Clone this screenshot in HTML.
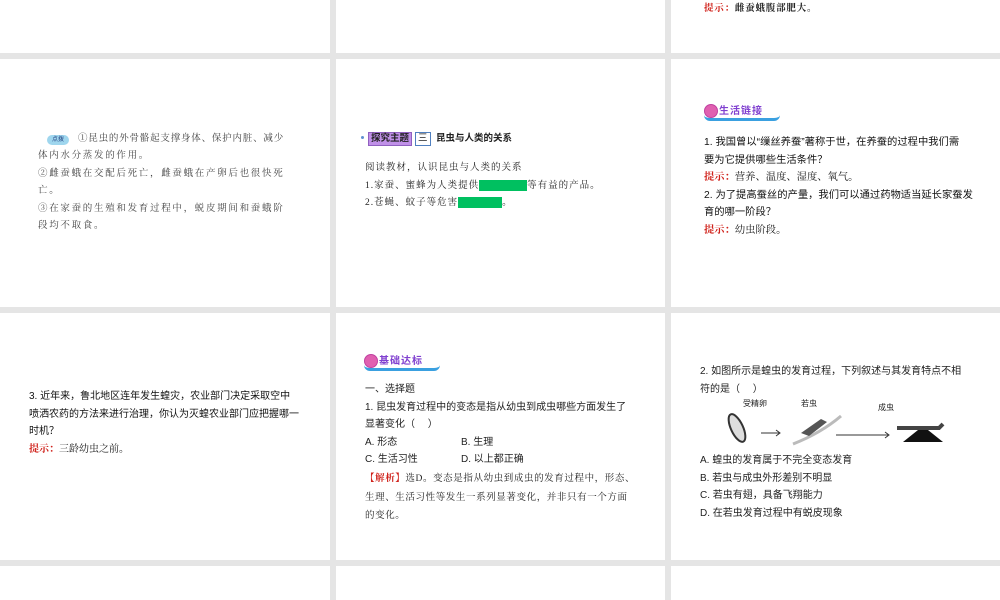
<!DOCTYPE html>
<html><head><meta charset="utf-8"><style>
body{margin:0;width:1000px;height:600px;background:#e5e5e5;position:relative;overflow:hidden;font-family:"Liberation Sans","Noto Sans CJK SC",sans-serif;color:#222}
.p{position:absolute;background:#fff}
.t{position:absolute;font-size:9.5px;line-height:17.5px;white-space:nowrap}
.s{font-family:"Liberation Serif","Noto Serif CJK SC",serif}
.r{color:#d0221b;font-weight:bold}
.b{font-weight:bold}
.badge{position:absolute;height:14px;border-bottom:3px solid #3aa0e0;border-radius:0 0 6px 6px;white-space:nowrap}
.badge .c{position:absolute;left:0;top:0;width:12px;height:12px;border-radius:50%;background:#e060b0;border:1px solid #c040a0}
.badge .w{position:absolute;left:15px;top:-2px;font-size:10px;font-weight:bold;color:#8040d0;letter-spacing:1px;white-space:nowrap}
.g{display:inline-block;background:#00c060;height:11px;vertical-align:middle}
</style></head><body>
<div class="p" style="left:0;top:0;width:330px;height:53px"></div>
<div class="p" style="left:336px;top:0;width:329px;height:53px"></div>
<div class="p" style="left:671px;top:0;width:329px;height:53px">
<div class="t s" style="left:33px;top:1px;letter-spacing:0.8px"><span class="r">提示：</span><span class="b">雌蚕蛾腹部肥大。</span></div></div>

<div class="p" style="left:0;top:59px;width:330px;height:248px">
<div style="position:absolute;left:47px;top:76px;width:22px;height:10px;border-radius:5px;background:#9fd6ee;font-size:6px;text-align:center;line-height:10px;color:#204080">点拨</div>
<div class="t s" style="left:78px;top:72px;color:#444;letter-spacing:0.8px">①昆虫的外骨骼起支撑身体、保护内脏、减少</div>
<div class="t s" style="left:38px;top:89px;color:#444;letter-spacing:1.7px">体内水分蒸发的作用。<br>②雌蚕蛾在交配后死亡，雌蚕蛾在产卵后也很快死<br>亡。<br>③在家蚕的生殖和发育过程中，蜕皮期间和蚕蛾阶<br>段均不取食。</div></div>

<div class="p" style="left:336px;top:59px;width:329px;height:248px">
<div style="position:absolute;left:25px;top:77px;width:3px;height:3px;border-radius:50%;background:#6090d0"></div>
<div style="position:absolute;left:32px;top:73px;background:#c090e8;border:1px solid #9060c0;font-size:9.5px;font-weight:bold;padding:0 2px;line-height:12px">探究主题</div>
<div style="position:absolute;left:79px;top:73px;border:1px solid #5080c0;font-size:9.5px;padding:0 2px;line-height:12px">三</div>
<div class="t b" style="left:100px;top:71px">昆虫与人类的关系</div>
<div class="t s" style="left:29px;top:101px;letter-spacing:1px">阅读教材，认识昆虫与人类的关系<br>1.家蚕、蜜蜂为人类提供<span class="g" style="width:48px"></span>等有益的产品。<br>2.苍蝇、蚊子等危害<span class="g" style="width:44px"></span>。</div></div>

<div class="p" style="left:671px;top:59px;width:329px;height:248px">
<div class="badge" style="left:33px;top:45px;width:76px"><div class="c"></div><div class="w">生活链接</div></div>
<div class="t" style="left:33px;top:75px;font-size:10.3px;color:#111">1. 我国曾以“缫丝养蚕”著称于世，在养蚕的过程中我们需<br>要为它提供哪些生活条件？<br><span class="r s">提示：</span><span class="s">营养、温度、湿度、氧气。</span><br>2. 为了提高蚕丝的产量，我们可以通过药物适当延长家蚕发<br>育的哪一阶段？<br><span class="r s">提示：</span><span class="s">幼虫阶段。</span></div></div>

<div class="p" style="left:0;top:313px;width:330px;height:247px">
<div class="t" style="left:29px;top:75px;font-size:10px;color:#111">3. 近年来，鲁北地区连年发生蝗灾，农业部门决定采取空中<br>喷洒农药的方法来进行治理，你认为灭蝗农业部门应把握哪一<br>时机？<br><span class="r s">提示：</span><span class="s">三龄幼虫之前。</span></div></div>

<div class="p" style="left:336px;top:313px;width:329px;height:247px">
<div class="badge" style="left:28px;top:41px;width:76px"><div class="c"></div><div class="w">基础达标</div></div>
<div class="t" style="left:29px;top:68px;font-size:10px">一、选择题<br>1. 昆虫发育过程中的变态是指从幼虫到成虫哪些方面发生了<br>显著变化（　 ）<br>A. 形态<span style="position:absolute;left:96px">B. 生理</span><br>C. 生活习性<span style="position:absolute;left:96px">D. 以上都正确</span></div>
<div class="t s" style="left:29px;top:157px;line-height:18.5px;letter-spacing:0.6px"><span class="r">【解析】</span>选D。变态是指从幼虫到成虫的发育过程中，形态、<br>生理、生活习性等发生一系列显著变化，并非只有一个方面<br>的变化。</div></div>

<div class="p" style="left:671px;top:313px;width:329px;height:247px">
<div class="t" style="left:29px;top:50px;font-size:10px">2. 如图所示是蝗虫的发育过程，下列叙述与其发育特点不相<br>符的是（　 ）</div>
<div class="t" style="left:72px;top:86px;font-size:8px;line-height:10px">受精卵</div>
<div class="t" style="left:130px;top:86px;font-size:8px;line-height:10px">若虫</div>
<div class="t" style="left:207px;top:90px;font-size:8px;line-height:10px">成虫</div>
<svg style="position:absolute;left:50px;top:95px" width="260" height="42">
<ellipse cx="16" cy="20" rx="6" ry="15" transform="rotate(-25 16 20)" fill="#ddd" stroke="#333" stroke-width="2"/>
<path d="M40 25h18M55 22l4 3-4 3M115 27h52M164 24l4 3-4 3" stroke="#333" fill="none"/>
<path d="M72 36Q100 25 120 8" stroke="#bbb" stroke-width="3" fill="none"/>
<path d="M80 25l20-14 6 3-18 14z" fill="#555"/>
<path d="M182 34l20-16 20 16z" fill="#111"/><path d="M176 20h42l4-4" stroke="#444" stroke-width="4" fill="none"/>
</svg>
<div class="t" style="left:29px;top:139px;font-size:10px">A. 蝗虫的发育属于不完全变态发育<br>B. 若虫与成虫外形差别不明显<br>C. 若虫有翅，具备飞翔能力<br>D. 在若虫发育过程中有蜕皮现象</div></div>

<div class="p" style="left:0;top:566px;width:330px;height:34px"></div>
<div class="p" style="left:336px;top:566px;width:329px;height:34px"></div>
<div class="p" style="left:671px;top:566px;width:329px;height:34px"></div>
</body></html>
